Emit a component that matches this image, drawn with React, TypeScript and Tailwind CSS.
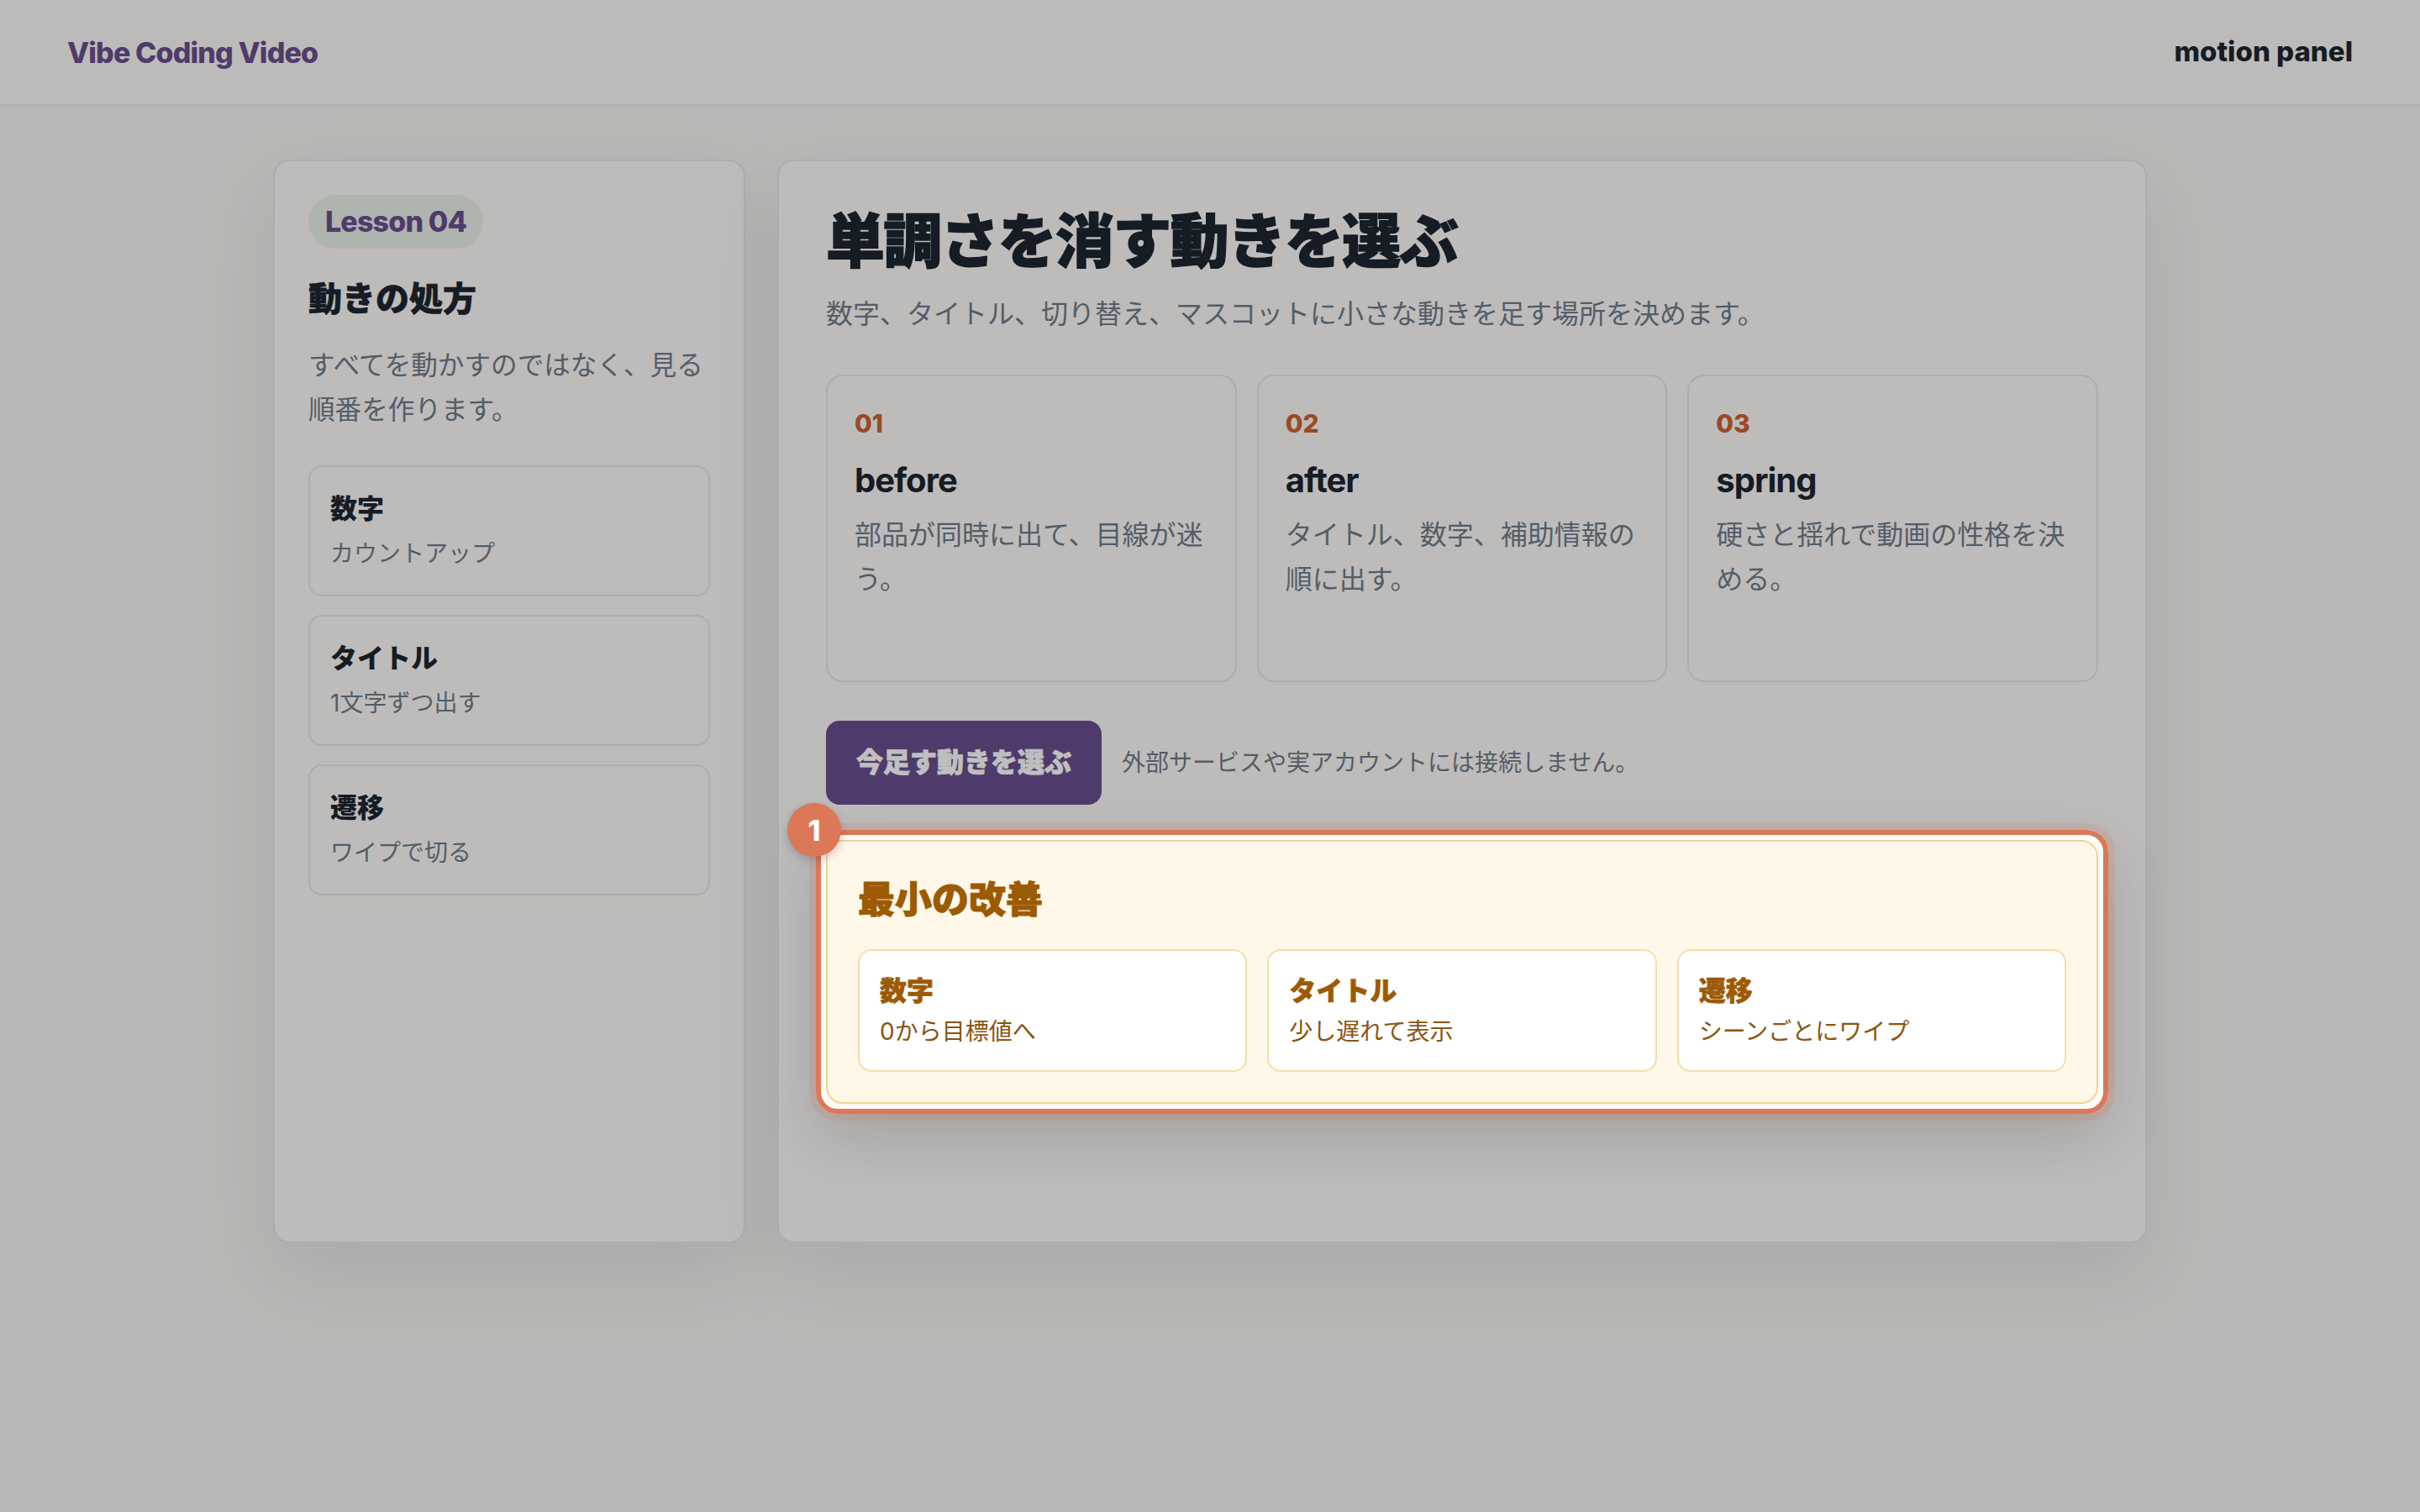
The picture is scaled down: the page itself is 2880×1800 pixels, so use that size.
const lessonItems = [
  { title: '数字', note: 'カウントアップ' },
  { title: 'タイトル', note: '1文字ずつ出す' },
  { title: '遷移', note: 'ワイプで切る' },
];

const steps = [
  { no: '01', title: 'before', body: '部品が同時に出て、目線が迷う。' },
  { no: '02', title: 'after', body: 'タイトル、数字、補助情報の順に出す。' },
  { no: '03', title: 'spring', body: '硬さと揺れで動画の性格を決める。' },
];

const picks = [
  { title: '数字', note: '0から目標値へ' },
  { title: 'タイトル', note: '少し遅れて表示' },
  { title: '遷移', note: 'シーンごとにワイプ' },
];

function Sidebar() {
  return (
    <aside className="min-h-[645px] rounded-[10px] border border-slate-200 bg-[#fcfbf8] p-5 shadow-[0_18px_48px_rgba(15,23,42,0.08)]">
      <span className="inline-block rounded-full bg-[#eaf1ea] px-2.5 py-1 text-[17px] font-extrabold leading-6 tracking-tight text-[#6a4f8f]">
        Lesson 04
      </span>
      <h2 className="mt-4 text-xl font-extrabold leading-7 [-webkit-text-stroke:0.3px_currentcolor]">動きの処方</h2>
      <p className="mt-3 text-[15.8px] leading-[26.6px] text-[#717d8b]">
        すべてを動かすのではなく、見る順番を作ります。
      </p>
      <ul className="mt-5 flex flex-col gap-[11px]">
        {lessonItems.map((item) => (
          <li key={item.title} className="rounded-lg border border-slate-200 px-3 py-[13px]">
            <p className="text-base font-extrabold leading-6">{item.title}</p>
            <p className="mt-[3px] text-sm leading-[23px] text-[#717d8b]">{item.note}</p>
          </li>
        ))}
      </ul>
    </aside>
  );
}

function Spotlight() {
  return (
    <>
      <div className="pointer-events-none absolute -inset-[6px] z-10 rounded-[13px] border-[3px] border-[#dc7757] shadow-[0_0_0_4px_rgba(220,119,87,0.18),0_14px_36px_rgba(0,0,0,0.14),0_0_0_9999px_rgba(0,0,0,0.25)]" />
      <span className="absolute -left-[23px] -top-[22px] z-20 flex size-8 items-center justify-center rounded-full bg-[#dc7757] text-[17px] font-extrabold text-white shadow-[0_2px_6px_rgba(0,0,0,0.2)]">
        1
      </span>
    </>
  );
}

function Workspace() {
  return (
    <section className="rounded-[10px] border border-slate-200 bg-[#fcfbf8] p-7 shadow-[0_18px_48px_rgba(15,23,42,0.08)]">
      <h1 className="text-[35px] font-black leading-10 tracking-tight [-webkit-text-stroke:0.7px_currentcolor]">
        単調さを消す動きを選ぶ
      </h1>
      <p className="mt-2.5 text-base leading-[26px] text-[#717d8b]">
        数字、タイトル、切り替え、マスコットに小さな動きを足す場所を決めます。
      </p>

      <div className="mt-[23px] grid grid-cols-3 gap-3">
        {steps.map((step) => (
          <article key={step.no} className="h-[183px] rounded-[10px] border border-slate-200 px-4 pt-[17px]">
            <p className="text-[15px] font-extrabold leading-[22px] text-[#cd6330]">{step.no}</p>
            <h3 className="mt-[9px] text-xl font-bold leading-7 tracking-tight">{step.title}</h3>
            <p className="mt-[5px] text-base leading-[26.6px] text-[#717d8b]">{step.body}</p>
          </article>
        ))}
      </div>

      <div className="mt-[23px] flex items-center gap-3">
        <button className="h-[50px] rounded-lg bg-[#6a4f8f] px-[18px] text-base font-black text-white [-webkit-text-stroke:0.4px_currentcolor]">
          今足す動きを選ぶ
        </button>
        <span className="text-sm text-[#717d8b]">外部サービスや実アカウントには接続しません。</span>
      </div>

      <div className="relative mt-[21px]">
        <Spotlight />
        <div className="rounded-[10px] border border-[#f0d39a] bg-[#fff8e8] p-[18px]">
          <h3 className="text-[22px] font-black leading-[33px] text-[#9c5a03] [-webkit-text-stroke:0.5px_currentcolor]">
            最小の改善
          </h3>
          <div className="mt-[13px] grid grid-cols-3 gap-3">
            {picks.map((pick) => (
              <div key={pick.title} className="rounded-lg border border-[#f6dcaa] bg-white p-3">
                <p className="text-base font-extrabold leading-6 text-[#9c5a03] [-webkit-text-stroke:0.3px_currentcolor]">
                  {pick.title}
                </p>
                <p className="mt-px text-sm leading-[22px] text-[#8a5410]">{pick.note}</p>
              </div>
            ))}
          </div>
        </div>
      </div>
    </section>
  );
}

export default function App() {
  return (
    <div className="h-[900px] w-[1440px] overflow-hidden bg-[#f5f5f2] font-['Inter','Noto_Sans_CJK_JP',sans-serif] text-[#1d2631] [zoom:2]">
      <header className="flex h-[63px] items-center justify-between border-b border-[#e6eaee] bg-[#fbfaf7] px-10">
        <span className="text-[17px] font-extrabold tracking-tight text-[#6a4f8f]">Vibe Coding Video</span>
        <span className="text-[16.5px] font-extrabold">motion panel</span>
      </header>
      <main className="mx-auto grid w-[1115px] grid-cols-[281px_1fr] gap-[19px] pt-8">
        <Sidebar />
        <Workspace />
      </main>
    </div>
  );
}
